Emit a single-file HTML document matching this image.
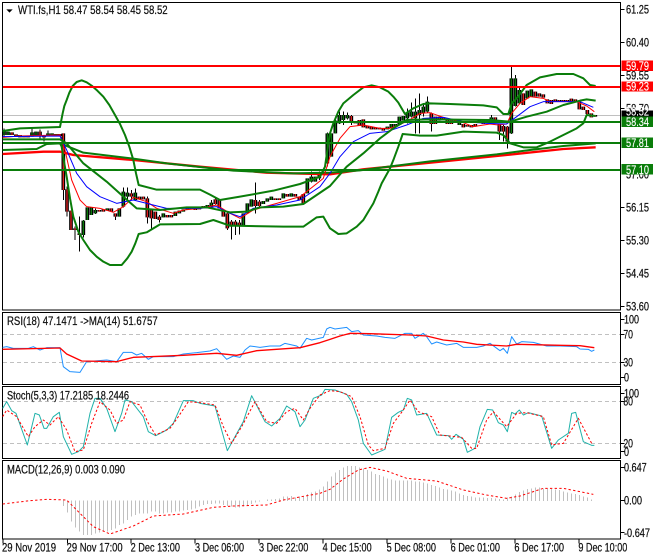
<!DOCTYPE html>
<html><head><meta charset="utf-8"><style>
html,body{margin:0;padding:0;background:#fff;width:660px;height:560px;overflow:hidden}
svg{display:block}
text{font-family:"Liberation Sans",sans-serif;font-size:36px;fill:#111;stroke:#111;stroke-width:.7px}
text.w{fill:#fff;stroke:#fff;stroke-width:.4px}
.c{fill:none;stroke-linejoin:round}
.b{fill:none;stroke:#0a7d0a;stroke-width:6;stroke-linejoin:round}
.l{fill:none;stroke-width:6;shape-rendering:crispEdges}
.d{stroke:#c0c0c0;stroke-width:3;stroke-dasharray:12 9;fill:none;shape-rendering:crispEdges}
.f{fill:#fff;stroke:#000;stroke-width:3;shape-rendering:crispEdges}
.k{stroke:#000;stroke-width:3;fill:none;shape-rendering:crispEdges}
</style></head><body>
<svg width="660" height="560" viewBox="0 0 1980 1680" xmlns="http://www.w3.org/2000/svg">
<defs>
<path id="cg" d="M12 390V405M24 395V405M96 397V410M108 395V408M144 400V408M156 400V407M168 402V408M250 662V705M262 622V660M274 622V645M286 630V640M322 625V632M358 625V650M370 575V620M382 578V590M406 578V600M490 640V652M526 635V648M538 632V640M550 628V635M562 622V628M622 615V625M634 608V620M730 640V675M742 610V640M754 598V620M790 603V612M802 595V605M814 590V600M850 580V595M874 580V590M922 535V580M934 530V545M946 530V545M958 522V535M970 515V522M982 400V490M994 400V470"/>
<path id="cr" d="M36 397V405M48 403V410M60 405V412M72 408V412M84 408V412M120 395V408M132 408V412M180 402V408M190 400V570M201 568V635M213 632V690M225 685V690M238 700V705M298 630V635M310 628V635M334 625V635M346 640V650M394 580V590M418 590V598M430 590V598M442 595V652M454 630V655M466 635V657M478 650V660M502 645V652M514 645V652M574 622V628M586 625V630M598 622V628M610 618V625M646 598V612M658 600V625M670 630V650M682 640V685M694 665V680M706 665V675M718 668V675M766 600V618M778 605V618M826 595V600M838 595V600M862 582V590M886 582V590M898 590V600M910 582V610"/>
<path id="dg" d="M1006 362V400M1018 345V370M1030 345V360M1042 345V355M1162 380V388M1174 372V385M1186 372V380M1198 350V375M1210 348V362M1222 338V355M1234 335V350M1246 335V355M1258 330V345M1270 320V340M1282 305V335M1366 358V368M1378 368V375M1438 358V368M1462 358V365M1474 352V358M1534 235V400M1546 235V318M1558 270V310M1582 272V295M1594 268V290"/>
<path id="dr" d="M1054 348V365M1066 365V370M1078 360V378M1090 358V382M1102 378V385M1114 380V388M1126 382V388M1138 383V388M1150 385V392M1294 340V372M1306 350V372M1318 350V362M1330 352V360M1342 360V372M1354 362V372M1390 372V382M1402 375V380M1414 375V382M1426 372V380M1450 362V372M1486 352V360M1498 372V395M1510 378V395M1522 380V425M1570 280V315M1606 275V290M1618 280V290M1630 283V293M1642 298V310M1654 300V312M1666 298V305M1678 300V305M1690 300V305M1702 300V305M1714 296V305M1726 298V305M1738 305V328M1750 320V330M1762 330V342M1774 340V352M1786 345V350"/>
</defs>

<!-- frames -->
<rect class="f" x="7.5" y="7.5" width="1854" height="922.5"/>
<rect class="f" x="7.5" y="937.5" width="1854" height="216"/>
<rect class="f" x="7.5" y="1159.5" width="1854" height="216"/>
<rect class="f" x="7.5" y="1381.5" width="1854" height="236"/>

<!-- gray price line -->
<path d="M9 346H1860" stroke="#c0c0c0" stroke-width="3" fill="none" shape-rendering="crispEdges"/>

<!-- wicks -->
<path class="k" d="M12 385V410M96 385V410M120 388V415M132 405V425M144 392V408M190 400V600M201 560V650M225 680V720M238 650V755M250 660V712M286 625V642M346 640V660M370 562V622M382 562V600M394 570V600M406 565V602M442 590V670M454 625V685M478 645V668M634 600V622M646 592V614M682 635V690M694 660V718M706 660V705M718 660V703M766 548V640M778 600V620M934 515V548M958 515V540M982 398V500M994 400V430M1006 350V400M1018 335V372M1030 335V375M1042 338V358M1054 345V375M1222 325V370M1234 308V352M1246 295V400M1258 280V400M1270 310V350M1282 290V337M1294 338V395M1498 370V420M1510 375V425M1522 378V445M1534 200V402M1546 225V320M1558 262V312M1474 345V360"/>
<!-- candle bodies -->
<g fill="none" stroke="#000" stroke-width="11"><use href="#cg"/><use href="#cr"/><use href="#dg"/><use href="#dr"/></g>
<g fill="none" stroke="#0b7a0b" stroke-width="4"><use href="#cg"/><use href="#dg"/></g>
<g fill="none" stroke="#e02020" stroke-width="4"><use href="#cr"/><use href="#dr"/></g>

<!-- thick MA -->
<polyline class="c" stroke="#f00" stroke-width="7" points="8,462 130,455 180,455 220,465 400,480 600,500 800,518 990,523 1090,508 1290,488 1490,468 1690,447 1787,442"/>
<polyline class="c" stroke="#0a7d0a" stroke-width="6" points="180,430 250,458 400,476 500,490 700,512 880,520 990,518 1080,511 1290,484 1490,463 1590,450 1690,438 1787,430"/>

<!-- thin MA -->
<polyline class="c" stroke="#f00" stroke-width="3" points="8,412 60,408 180,405 195,450 215,540 240,600 260,620 300,625 340,637 370,620 400,592 440,605 470,625 520,640 550,630 600,625 650,615 690,640 720,655 760,630 830,610 900,590 920,575 970,535 990,470 1020,415 1050,380 1090,375 1140,385 1170,385 1220,365 1260,340 1290,338 1330,352 1390,368 1420,380 1470,372 1495,375 1520,372 1535,340 1560,310 1590,290 1630,295 1650,305 1730,305 1760,318 1783,335"/>
<polyline class="c" stroke="#00f" stroke-width="3" points="8,410 180,408 200,450 230,520 260,560 300,590 350,610 400,600 440,610 500,625 600,625 650,620 690,640 720,650 760,625 830,615 900,600 960,560 990,520 1020,470 1060,425 1110,400 1160,395 1220,375 1270,355 1330,352 1390,365 1460,370 1520,372 1550,350 1590,320 1630,305 1690,305 1740,305 1780,322"/>

<!-- Bollinger -->
<polyline class="b" points="8,393 60,385 180,381 188,340 193,318 200,300 208,278 218,258 230,246 245,241 260,247 275,257 292,272 310,290 328,315 345,345 360,372 375,405 388,440 400,480 408,520 416,555 470,569 600,569 630,584 660,600 720,590 820,572 900,552 960,530 975,500 985,430 990,400 1000,370 1015,335 1030,310 1060,285 1090,262 1115,256 1140,262 1165,275 1180,290 1195,308 1205,325 1215,342 1240,325 1270,312 1290,310 1350,312 1450,316 1490,322 1510,342 1525,342 1535,310 1550,295 1565,275 1580,255 1620,232 1670,222 1720,222 1750,235 1770,255 1787,258"/>
<polyline class="b" points="8,418 180,418 200,430 250,490 320,545 370,590 410,625 480,630 560,622 620,622 690,637 740,635 780,622 850,620 910,612 950,585 990,558 1040,500 1090,460 1140,415 1180,385 1220,360 1290,358 1470,360 1530,365 1580,350 1640,335 1690,315 1740,302 1760,298 1787,302"/>
<polyline class="b" points="8,450 110,447 140,432 180,430 185,440 192,485 200,530 210,595 220,650 235,695 250,720 270,750 290,770 310,785 330,795 365,795 382,775 395,755 406,730 416,702 440,697 480,673 600,672 640,660 690,677 850,680 910,680 950,652 970,650 990,685 1015,702 1040,700 1070,680 1090,660 1105,635 1120,610 1135,575 1145,550 1170,505 1182,475 1195,440 1208,402 1260,407 1310,407 1390,395 1490,398 1510,405 1530,430 1570,442 1610,442 1650,425 1690,405 1730,385 1750,370 1760,345 1787,348"/>

<!-- horizontal levels -->
<path class="l" stroke="#f00" d="M9 198H1860M9 261H1860"/>
<path class="l" stroke="#0a7d0a" d="M9 366H1860M9 429H1860M9 510H1860"/>

<text x="54" y="42" textLength="449" lengthAdjust="spacingAndGlyphs">WTI.fs,H1  58.47 58.54 58.45 58.52</text>
<path d="M19 28H38L28.5 38Z" fill="#000"/>

<!-- RSI -->
<path class="d" d="M9 1003H1860M9 1087H1860"/>
<polyline class="c" stroke="#1e90ff" stroke-width="3" points="8,1042 20,1040 40,1045 85,1045 100,1040 120,1050 140,1043 180,1043 190,1100 210,1115 240,1117 260,1085 320,1080 350,1085 370,1057 395,1057 410,1065 425,1060 445,1078 460,1070 520,1070 550,1062 590,1058 630,1053 650,1046 680,1078 700,1068 720,1072 735,1050 750,1038 780,1042 810,1038 840,1038 855,1030 890,1038 900,1045 920,1015 935,1020 970,1012 980,987 990,982 1005,987 1040,982 1055,995 1075,992 1090,1005 1130,1008 1155,1012 1185,1015 1215,1000 1235,1000 1245,1015 1270,1000 1280,1010 1295,1032 1310,1026 1340,1035 1370,1030 1390,1042 1430,1042 1450,1038 1470,1030 1500,1052 1510,1045 1522,1060 1535,1010 1550,1032 1565,1025 1600,1027 1640,1038 1680,1038 1730,1040 1740,1047 1765,1048 1775,1054 1783,1050"/>
<polyline class="c" stroke="#f00" stroke-width="4" points="8,1048 180,1044 200,1062 245,1083 350,1085 400,1072 450,1070 550,1066 650,1060 710,1066 770,1052 900,1043 960,1028 990,1018 1020,1008 1050,1000 1110,1001 1230,1005 1280,1008 1330,1020 1390,1026 1430,1033 1520,1038 1550,1033 1680,1036 1740,1037 1783,1043"/>
<text x="21" y="975" textLength="452" lengthAdjust="spacingAndGlyphs">RSI(18) 47.1471  -&gt;MA(14) 51.6757</text>

<!-- Stoch -->
<path class="d" d="M9 1204H1860M9 1330H1860"/>
<polyline class="c" stroke="#20b2aa" stroke-width="3" points="8,1225 20,1205 35,1232 48,1240 82,1335 105,1240 118,1245 132,1285 140,1285 160,1250 178,1237 190,1310 215,1363 235,1355 250,1340 270,1240 285,1195 300,1195 320,1225 345,1295 365,1240 375,1200 395,1205 430,1250 445,1295 467,1307 500,1290 520,1270 550,1202 580,1202 600,1210 645,1218 682,1352 730,1265 755,1187 795,1265 815,1278 840,1255 860,1218 885,1235 900,1280 915,1260 940,1195 965,1185 975,1168 1005,1170 1040,1183 1055,1205 1075,1260 1090,1330 1115,1365 1155,1348 1175,1252 1195,1237 1210,1230 1222,1195 1235,1200 1250,1245 1280,1240 1310,1305 1345,1307 1355,1318 1368,1303 1390,1318 1402,1357 1425,1345 1440,1280 1462,1228 1478,1230 1495,1268 1510,1275 1522,1295 1535,1237 1545,1242 1558,1230 1570,1245 1585,1238 1625,1248 1655,1345 1675,1320 1705,1300 1715,1240 1727,1237 1750,1325 1775,1336 1783,1336"/>
<polyline class="c" stroke="#f00" stroke-width="3" stroke-dasharray="7 6" points="8,1250 20,1230 50,1250 85,1310 105,1280 130,1260 150,1275 175,1250 200,1290 225,1355 250,1350 275,1270 300,1205 330,1230 350,1270 370,1260 390,1205 420,1215 445,1270 467,1305 510,1285 535,1250 565,1205 600,1208 645,1215 670,1280 695,1330 725,1280 765,1205 800,1265 830,1270 860,1235 885,1225 910,1260 930,1225 960,1185 990,1172 1020,1175 1055,1190 1080,1250 1105,1335 1120,1352 1155,1345 1180,1270 1210,1230 1230,1200 1255,1235 1295,1250 1320,1305 1385,1312 1415,1345 1430,1345 1460,1260 1480,1235 1520,1280 1550,1240 1580,1238 1630,1250 1655,1335 1690,1330 1735,1255 1775,1330"/>
<text x="21" y="1198" textLength="366" lengthAdjust="spacingAndGlyphs">Stoch(5,3,3) 17.2185 18.2446</text>

<!-- MACD -->
<path fill="none" stroke="#c0c0c0" stroke-width="3" shape-rendering="crispEdges" d="M190 1501V1518M202 1501V1538M214 1501V1565M226 1501V1582M238 1501V1595M250 1501V1605M262 1501V1605M274 1501V1605M286 1501V1600M298 1501V1598M310 1501V1595M322 1501V1595M334 1501V1590M346 1501V1585M358 1501V1575M370 1501V1570M382 1501V1560M394 1501V1550M406 1501V1545M418 1501V1540M430 1501V1540M442 1501V1540M454 1501V1535M466 1501V1535M478 1501V1540M490 1501V1540M502 1501V1538M514 1501V1538M526 1501V1535M538 1501V1535M550 1501V1532M562 1501V1530M574 1501V1528M586 1501V1525M598 1501V1520M610 1501V1515M622 1501V1512M634 1501V1512M646 1501V1510M658 1501V1510M670 1501V1515M682 1501V1518M694 1501V1520M706 1501V1522M718 1501V1522M730 1501V1520M742 1501V1518M754 1501V1512M766 1501V1508M778 1501V1505M802 1503V1498M814 1503V1498M826 1503V1497M838 1503V1495M850 1503V1490M862 1503V1490M874 1503V1488M886 1503V1492M898 1503V1490M910 1503V1490M922 1503V1482M934 1503V1478M946 1503V1475M958 1503V1468M970 1503V1460M982 1503V1445M994 1503V1430M1006 1503V1418M1018 1503V1410M1030 1503V1403M1042 1503V1398M1054 1503V1398M1066 1503V1398M1078 1503V1402M1090 1503V1405M1102 1503V1410M1114 1503V1415M1126 1503V1422M1138 1503V1425M1150 1503V1430M1162 1503V1435M1174 1503V1438M1186 1503V1442M1198 1503V1442M1210 1503V1442M1222 1503V1442M1234 1503V1442M1246 1503V1445M1258 1503V1445M1270 1503V1447M1282 1503V1450M1294 1503V1455M1306 1503V1458M1318 1503V1462M1330 1503V1467M1342 1503V1468M1354 1503V1472M1366 1503V1475M1378 1503V1480M1390 1503V1485M1402 1503V1488M1414 1503V1490M1426 1503V1492M1438 1503V1493M1450 1503V1493M1462 1503V1494M1474 1503V1494M1486 1503V1495M1498 1503V1497M1510 1503V1498M1522 1503V1492M1534 1503V1490M1546 1503V1483M1558 1503V1476M1570 1503V1472M1582 1503V1467M1594 1503V1465M1606 1503V1463M1618 1503V1462M1630 1503V1465M1642 1503V1466M1654 1503V1467M1666 1503V1468M1678 1503V1470M1690 1503V1475M1702 1503V1477M1714 1503V1480M1726 1503V1482M1738 1503V1485M1750 1503V1490M1762 1503V1493M1774 1503V1498"/>
<polyline class="c" stroke="#f00" stroke-width="3" stroke-dasharray="7 7" points="8,1512 90,1502 140,1498 200,1500 230,1530 280,1580 330,1602 400,1578 460,1548 550,1542 640,1522 700,1518 800,1515 850,1500 960,1480 990,1468 1030,1437 1075,1410 1110,1402 1160,1413 1220,1435 1310,1443 1390,1470 1460,1485 1520,1495 1560,1488 1630,1465 1690,1465 1780,1483"/>
<text x="21" y="1420" textLength="354" lengthAdjust="spacingAndGlyphs">MACD(12,26,9) 0.003 0.090</text>

<!-- Right axis ticks -->
<path class="k" d="M1862 28H1873M1862 127H1873M1862 226H1873M1862 325H1873M1862 622H1873M1862 721H1873M1862 820H1873M1862 919H1873M1862 958H1873M1862 1003H1873M1862 1087H1873M1862 1132H1873M1862 1180H1873M1862 1204H1873M1862 1330H1873M1862 1355H1873M1862 1402H1873M1862 1501H1873M1862 1598H1873"/>
<g>
<text x="1878" y="41" textLength="69" lengthAdjust="spacingAndGlyphs">61.25</text>
<text x="1878" y="140" textLength="69" lengthAdjust="spacingAndGlyphs">60.40</text>
<text x="1878" y="239" textLength="69" lengthAdjust="spacingAndGlyphs">59.55</text>
<text x="1878" y="338" textLength="69" lengthAdjust="spacingAndGlyphs">58.70</text>
<text x="1878" y="536" textLength="69" lengthAdjust="spacingAndGlyphs">57.00</text>
<text x="1878" y="635" textLength="69" lengthAdjust="spacingAndGlyphs">56.15</text>
<text x="1878" y="734" textLength="69" lengthAdjust="spacingAndGlyphs">55.30</text>
<text x="1878" y="833" textLength="69" lengthAdjust="spacingAndGlyphs">54.45</text>
<text x="1878" y="932" textLength="69" lengthAdjust="spacingAndGlyphs">53.60</text>
<text x="1872" y="971" textLength="45" lengthAdjust="spacingAndGlyphs">100</text>
<text x="1870" y="1016" textLength="29" lengthAdjust="spacingAndGlyphs">70</text>
<text x="1870" y="1100" textLength="29" lengthAdjust="spacingAndGlyphs">30</text>
<text x="1872" y="1145" textLength="15" lengthAdjust="spacingAndGlyphs">0</text>
<text x="1872" y="1193" textLength="45" lengthAdjust="spacingAndGlyphs">100</text>
<text x="1870" y="1217" textLength="29" lengthAdjust="spacingAndGlyphs">80</text>
<text x="1870" y="1343" textLength="29" lengthAdjust="spacingAndGlyphs">20</text>
<text x="1872" y="1368" textLength="15" lengthAdjust="spacingAndGlyphs">0</text>
<text x="1872" y="1415" textLength="68" lengthAdjust="spacingAndGlyphs">0.647</text>
<text x="1872" y="1514" textLength="54" lengthAdjust="spacingAndGlyphs">0.00</text>
<text x="1872" y="1611" textLength="78" lengthAdjust="spacingAndGlyphs">-0.647</text>
</g>

<!-- Price labels -->
<g shape-rendering="crispEdges">
<rect x="1865" y="331" width="94" height="20" fill="#000"/>
<rect x="1865" y="182" width="94" height="31" fill="#f00"/>
<rect x="1865" y="244" width="94" height="31" fill="#f00"/>
<rect x="1865" y="350" width="94" height="31" fill="#0a7d0a"/>
<rect x="1865" y="412" width="94" height="32" fill="#0a7d0a"/>
<rect x="1865" y="492" width="94" height="32" fill="#0a7d0a"/>
</g>
<text class="w" x="1878" y="347" textLength="69" lengthAdjust="spacingAndGlyphs">58.52</text>
<text class="w" x="1878" y="210" textLength="69" lengthAdjust="spacingAndGlyphs">59.79</text>
<text class="w" x="1878" y="272" textLength="69" lengthAdjust="spacingAndGlyphs">59.23</text>
<text class="w" x="1878" y="378" textLength="69" lengthAdjust="spacingAndGlyphs">58.34</text>
<text class="w" x="1878" y="441" textLength="69" lengthAdjust="spacingAndGlyphs">57.81</text>
<text class="w" x="1878" y="522" textLength="69" lengthAdjust="spacingAndGlyphs">57.10</text>

<!-- Bottom ticks -->
<path class="k" d="M9 1618V1630M202 1618V1630M393 1618V1630M585 1618V1630M777 1618V1630M969 1618V1630M1161 1618V1630M1353 1618V1630M1545 1618V1630M1737 1618V1630"/>
<g>
<text x="6" y="1655" textLength="162" lengthAdjust="spacingAndGlyphs">29 Nov 2019</text>
<text x="200" y="1655" textLength="168" lengthAdjust="spacingAndGlyphs">29 Nov 17:00</text>
<text x="392" y="1655" textLength="148" lengthAdjust="spacingAndGlyphs">2 Dec 13:00</text>
<text x="585" y="1655" textLength="147" lengthAdjust="spacingAndGlyphs">3 Dec 06:00</text>
<text x="777" y="1655" textLength="148" lengthAdjust="spacingAndGlyphs">3 Dec 22:00</text>
<text x="968" y="1655" textLength="147" lengthAdjust="spacingAndGlyphs">4 Dec 15:00</text>
<text x="1160" y="1655" textLength="148" lengthAdjust="spacingAndGlyphs">5 Dec 08:00</text>
<text x="1352" y="1655" textLength="148" lengthAdjust="spacingAndGlyphs">6 Dec 01:00</text>
<text x="1543" y="1655" textLength="149" lengthAdjust="spacingAndGlyphs">6 Dec 17:00</text>
<text x="1735" y="1655" textLength="147" lengthAdjust="spacingAndGlyphs">9 Dec 10:00</text>
</g>
</svg>
</body></html>
